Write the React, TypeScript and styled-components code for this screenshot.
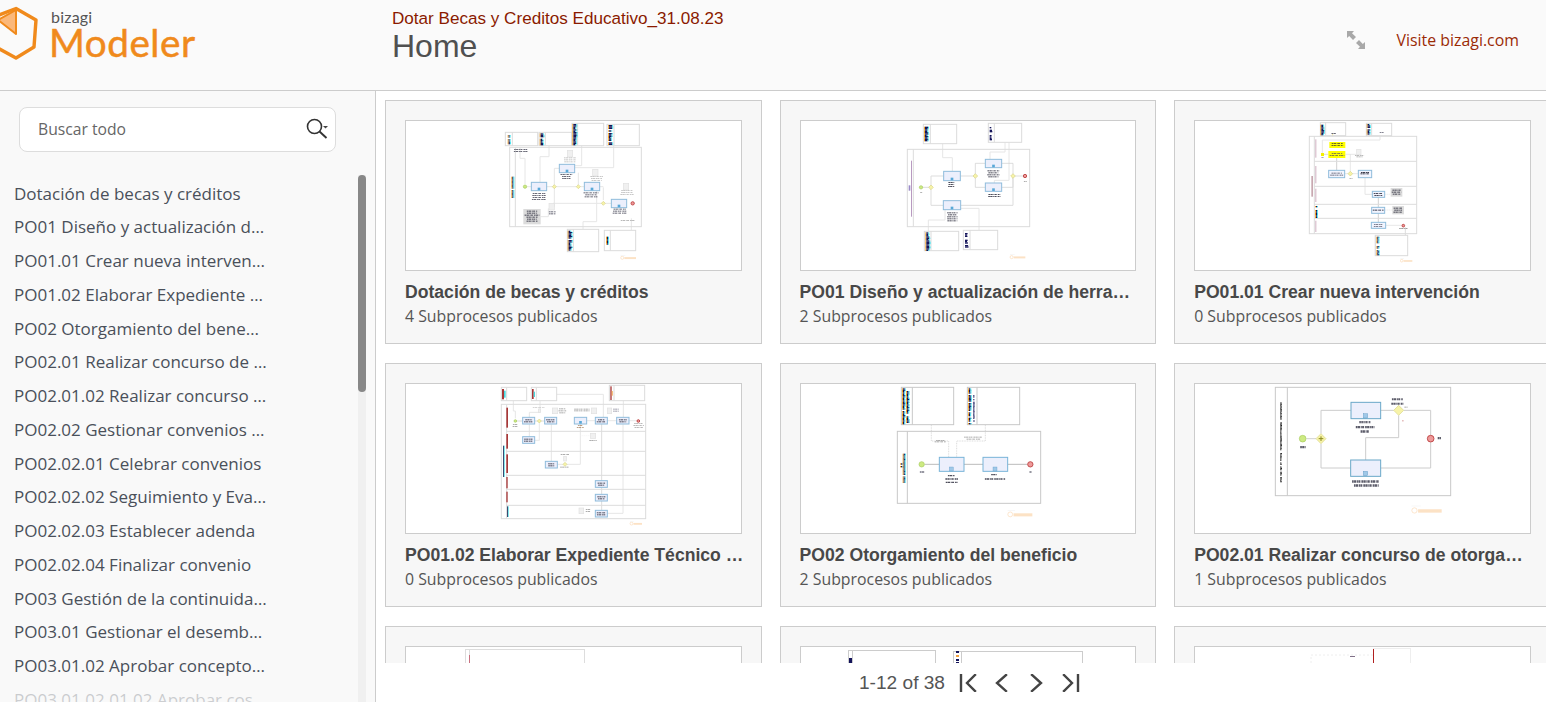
import React from "react";
import styled, { createGlobalStyle } from "styled-components";

const Global = createGlobalStyle`
  html, body { margin: 0; padding: 0; height: 100%; overflow: hidden; background: #fff; }
  #root { height: 100%; }
  * { box-sizing: border-box; }
`;

const Page = styled.div`
  display: flex; flex-direction: column; width: 1546px; height: 702px; overflow: hidden;
`;
const Header = styled.header`
  flex: 0 0 91px; display: flex; background: #fafafa; border-bottom: 1px solid #ccc; position: relative;
`;
const LogoBox = styled.div`
  flex: 0 0 392px; display: flex; align-items: flex-start;
`;
const LogoWords = styled.div`
  display: flex; flex-direction: column; margin: 8px 0 0 9px;
`;
const LogoSmall = styled.span`
  font: 400 16px/17px "Lato", sans-serif; color: #555; letter-spacing: .2px; margin-left: 2px;
`;
const LogoBig = styled.span`
  font: 400 38.7px/35px "Lato", sans-serif; color: #f08a1c; letter-spacing: .5px; -webkit-text-stroke: .5px #f08a1c;
`;
const HeaderTitles = styled.div`
  flex: 1; display: flex; flex-direction: column; padding-top: 9px;
`;
const ProcessName = styled.div`
  font: 400 17.1px/19px "Liberation Sans", Arial, sans-serif; color: #8a1a00;
`;
const PageName = styled.div`
  font: 400 32px/37px "Liberation Sans", Arial, sans-serif; color: #505050;
`;
const HeaderTools = styled.div`
  display: flex; align-items: center; gap: 32px; padding: 0 27px 10px 0;
`;
const VisitLink = styled.a`
  font: 400 15.9px/20px "Open Sans", sans-serif; color: #9a2a05;
`;
const Body = styled.div`
  flex: 1; display: flex; min-height: 0;
`;
const Sidebar = styled.aside`
  flex: 0 0 376px; background: #f9f9f9; border-right: 1px solid #ccc; position: relative; overflow: hidden;
  padding: 16px 0 0 0;
`;
const SearchBox = styled.div`
  width: 317px; height: 45px; margin-left: 19px; background: #fff; border: 1px solid #ddd; border-radius: 8px;
  display: flex; align-items: center; justify-content: space-between; padding: 0 6px 2px 18px;
`;
const SearchHint = styled.span`
  font: 400 15.7px/20px "Open Sans", sans-serif; color: #666;
`;
const TreeList = styled.ul`
  list-style: none; margin: 24.5px 0 0 0; padding: 0 0 0 14px;
`;
const TreeItem = styled.li`
  width: 254px; height: 33.75px; font: 400 17px/33.75px "Open Sans", sans-serif; color: #4a505a;
  white-space: nowrap; overflow: hidden; text-overflow: ellipsis;
`;
const Track = styled.div`
  position: absolute; left: 358px; top: 84px; bottom: 0; width: 8px; background: #f0f0f0;
`;
const Thumb = styled.div`
  height: 217px; background: #888; border-radius: 4px;
`;
const Fade = styled.div`
  position: absolute; left: 0; right: 18px; bottom: 0; height: 28px;
  background: linear-gradient(to bottom, rgba(249,249,249,0), rgba(249,249,249,.7) 40%, rgba(249,249,249,.75));
`;
const Main = styled.main`
  flex: 1; min-width: 0; display: flex; flex-direction: column; background: #fff;
`;
const Scroller = styled.div`
  flex: 1; min-height: 0; overflow: hidden; padding: 9px 0 0 9px;
`;
const CardGrid = styled.div`
  display: grid; grid-template-columns: repeat(3, 376.6px); gap: 19px 18px;
`;
const Card = styled.article`
  height: 244px; background: #f7f7f7; border: 1px solid #ccc; padding: 19px 19px 0 19px;
`;
const Preview = styled.div`
  width: 100%; height: 151px; background: #fff; border: 1px solid #ccc; overflow: hidden;
  svg { display: block; }
`;
const CardTitle = styled.h3`
  margin: 11px -3px 0 0; font: 700 17.6px/20px "Liberation Sans", Arial, sans-serif; color: #484848;
  white-space: nowrap; overflow: hidden; text-overflow: ellipsis;
`;
const CardMeta = styled.div`
  margin-top: 4px; font: 400 15.85px/20px "Open Sans", sans-serif; color: #555;
`;
const Pager = styled.footer`
  flex: 0 0 39px; background: #fff; display: flex; align-items: center; padding-left: 483px;
`;
const PagerText = styled.span`
  font: 400 19.1px/22px "Liberation Sans", Arial, sans-serif; color: #555; margin-right: 14px;
`;
const PagerIcons = styled.div`
  display: flex; align-items: center; gap: 12px;
`;

const BLUE = "#8fbcdc";
const LINE = "#e6e6e6";
const POOL = "#dcdcdc";

const hash = (n: number) => Math.abs(Math.sin(n * 12.9898) * 43758.5453) % 1;

type StripProps = { x: number; y: number; w: number; h: number; dark?: string; fringe?: boolean };
const Strip = ({ x, y, w, h, dark = "#14145a", fringe = true }: StripProps) => {
  const rows: React.ReactElement[] = [];
  const step = 4;
  for (let i = 0; i * step < h; i++) {
    const r = hash(x * 7 + y + i);
    if (r < 0.12) continue;
    const rw = Math.max(3, w * (0.4 + r * 0.6));
    const ry = y + i * step;
    rows.push(
      <g key={i}>
        {fringe && <rect x={x} y={ry} width={3} height={step} fill="#f2a020" />}
        <rect x={x + 3} y={ry} width={rw} height={step} fill={dark} />
        {fringe && <rect x={x + 3 + rw} y={ry} width={3} height={step} fill="#3fe0ee" />}
      </g>
    );
  }
  return <g>{rows}</g>;
};

type BarsProps = { x: number; y: number; w: number; n?: number; color?: string; gap?: number; t?: number };
const Bars = ({ x, y, w, n = 2, color = "#445", gap = 6, t = 3 }: BarsProps) => (
  <g opacity={0.8}>
    {Array.from({ length: n }).map((_, i) => {
      const bw = w * (0.65 + 0.35 * hash(x + i * 3 + y));
      const yy = y + i * gap + t / 2;
      return (
        <line key={i} x1={x + (w - bw) / 2} x2={x + (w + bw) / 2} y1={yy} y2={yy} stroke={color} strokeWidth={t}
          strokeDasharray="5 1 7 2 3 1 6 3" />
      );
    })}
  </g>
);

type PoolProps = { x: number; y: number; x2: number; y2: number; lane: number; color?: string; sw?: number };
const Pool = ({ x, y, x2, y2, lane, color = POOL, sw = 3 }: PoolProps) => (
  <g fill="none" stroke={color} strokeWidth={sw}>
    <rect x={x} y={y} width={x2 - x} height={y2 - y} />
    <line x1={lane} y1={y} x2={lane} y2={y2} />
  </g>
);

type TaskProps = { x: number; y: number; w: number; h: number; fill?: string; stroke?: string; mark?: boolean; sw?: number };
const Task = ({ x, y, w, h, fill = "#eceffc", stroke = BLUE, mark = true, sw = 3 }: TaskProps) => (
  <g>
    <rect x={x} y={y} width={w} height={h} fill={fill} stroke={stroke} strokeWidth={sw} />
    {mark && <rect x={x + w / 2 - 4} y={y + h - 9} width={8} height={8} fill="#58a8d8" />}
  </g>
);

type DotProps = { x: number; y: number; r?: number };
const Gate = ({ x, y, r = 8 }: DotProps) => (
  <polygon points={`${x},${y - r} ${x + r},${y} ${x},${y + r} ${x - r},${y}`} fill="#f7f3a8" stroke="#d8d48a" strokeWidth={2} />
);
const Start = ({ x, y, r = 5 }: DotProps) => <circle cx={x} cy={y} r={r} fill="#cdea82" stroke="#a8cc60" strokeWidth={2} />;
const End = ({ x, y, r = 5 }: DotProps) => <circle cx={x} cy={y} r={r} fill="#ee9a9a" stroke="#b83838" strokeWidth={2.5} />;

type LnProps = { p: string; c?: string; sw?: number; dash?: string };
const Ln = ({ p, c = LINE, sw = 3, dash }: LnProps) => (
  <polyline points={p} fill="none" stroke={c} strokeWidth={sw} strokeDasharray={dash} />
);

const Doc = ({ x, y, w = 16, h = 20 }: { x: number; y: number; w?: number; h?: number }) => (
  <rect x={x} y={y} width={w} height={h} fill="#f0f0f0" stroke="#e0e0e0" strokeWidth={2} />
);
const Note = ({ x, y, w, h }: { x: number; y: number; w: number; h: number }) => (
  <g>
    <rect x={x} y={y} width={w} height={h} fill="#dcdcdc" />
    <Bars x={x + 3} y={y + 5} w={w - 6} n={Math.floor((h - 6) / 6)} color="#223" />
  </g>
);
const Mark = ({ x, y, w = 46, h = 14 }: { x: number; y: number; w?: number; h?: number }) => (
  <g opacity={0.6}>
    <circle cx={x + h * 0.35} cy={y + h * 0.6} r={h * 0.33} fill="none" stroke="#fbc48a" strokeWidth={2} />
    <rect x={x + h * 0.8} y={y + h * 0.45} width={w - h * 0.8} height={h * 0.42} fill="#fbd0a0" />
    <rect x={x} y={y} width={w * 0.3} height={2} fill="#eee" />
  </g>
);

const Frame = ({ x0, y0, children }: { x0: number; y0: number; children: React.ReactNode }) => (
  <svg width={335} height={149} viewBox={`${x0} ${y0} 1005 447`}>{children}</svg>
);

const D1 = () => (
  <Frame x0={18} y0={63}>
    <Ln p="360,142 360,175 375,175 375,252" />
    <Ln p="447,137 447,170 420,170 420,247" />
    <Ln p="545,137 545,197 524,197" />
    <Ln p="641,137 641,203 524,203" />
    <Ln p="375,260 610,260" />
    <Ln p="463,205 478,205" />
    <Ln p="463,205 463,320" />
    <Ln p="459,310 634,310" />
    <Ln p="535,260 535,218" />
    <Ln p="590,272 590,365 549,365 549,388" />
    <Ln p="610,262 610,300" />
    <Ln p="694,355 694,390" />
    <Ln p="422,350 445,350 445,325" />
    <Pool x={316} y={97} x2={413} y2={137} lane={337} />
    <Strip x={323} y={105} w={4} h={26} />
    <Pool x={417} y={97} x2={515} y2={137} lane={436} />
    <Strip x={419} y={100} w={10} h={34} />
    <Pool x={516} y={70} x2={611} y2={137} lane={533} />
    <Strip x={517} y={72} w={11} h={62} />
    <Pool x={621} y={73} x2={718} y2={137} lane={642} />
    <Strip x={624} y={75} w={10} h={60} />
    <Pool x={329} y={142} x2={724} y2={380} lane={346} />
    <Strip x={334} y={230} w={2} h={62} />
    <Pool x={502} y={388} x2={596} y2={455} lane={520} />
    <Strip x={503} y={392} w={10} h={60} />
    <Pool x={613} y={391} x2={707} y2={452} lane={631} />
    <Strip x={618} y={410} w={3} h={22} />
    <Task x={394} y={247} w={46} h={25} />
    <Task x={478} y={193} w={46} h={25} />
    <Task x={553} y={247} w={46} h={25} />
    <Task x={634} y={298} w={46} h={25} />
    <Gate x={463} y={260} r={6} />
    <Gate x={535} y={260} r={6} />
    <Gate x={610} y={310} r={6} />
    <Start x={375} y={260} r={5} />
    <End x={698} y={310} r={5} />
    <Doc x={502} y={151} />
    <Doc x={578} y={208} />
    <Doc x={670} y={250} />
    <Doc x={447} y={310} />
    <Bars x={490} y={172} w={40} n={3} color="#bbb" />
    <Bars x={570} y={228} w={40} n={3} color="#bbb" />
    <Bars x={656} y={270} w={50} n={3} color="#bbb" />
    <Bars x={394} y={279} w={46} n={4} />
    <Bars x={480} y={222} w={38} n={3} />
    <Bars x={550} y={277} w={46} n={3} />
    <Bars x={636} y={326} w={46} n={3} />
    <Bars x={340} y={147} w={44} n={2} />
    <Bars x={445} y={334} w={24} n={2} />
    <Bars x={654} y={360} w={58} n={1} color="#aaa" />
    <Note x={370} y={327} w={52} h={46} />
    <Mark x={662} y={465} />
  </Frame>
);

const D2 = () => (
  <Frame x0={30} y0={33}>
    <Ln p="455,101 455,143 484,143 484,184" />
    <Ln p="642,97 642,126 597,126 597,148" />
    <Ln p="654,97 654,211 610,211 610,219" />
    <Ln p="390,232 420,232" c="#ddd" />
    <Ln p="420,232 420,198 458,198" c="#ddd" />
    <Ln p="420,232 420,286 457,286" c="#ddd" />
    <Ln p="508,198 553,198" c="#ddd" />
    <Ln p="553,198 553,160 583,160" c="#ccc" sw={2} />
    <Ln p="553,198 553,232 583,232" c="#ccc" sw={2} />
    <Ln p="632,160 666,160 666,198" c="#ccc" sw={2} />
    <Ln p="632,232 666,232 666,198" c="#ccc" sw={2} />
    <Ln p="509,286 666,286 666,198" c="#ddd" />
    <Ln p="666,198 702,198" c="#ddd" />
    <Ln p="462,299 462,330 412,330 412,364" />
    <Ln p="509,295 564,295 564,361" />
    <Pool x={397} y={43} x2={497} y2={101} lane={418} />
    <Strip x={399} y={50} w={10} h={43} />
    <Pool x={592} y={40} x2={692} y2={97} lane={610} />
    <Strip x={593} y={47} w={9} h={43} fringe={false} />
    <Pool x={349} y={118} x2={716} y2={350} lane={367} />
    <rect x={360} y={152} width={3} height={168} fill="#b89ac0" />
    <rect x={353} y={226} width={5} height={16} fill="#9a8ac8" />
    <Pool x={400} y={364} x2={503} y2={422} lane={420} />
    <Strip x={403} y={367} w={10} h={53} />
    <Pool x={517} y={361} x2={620} y2={419} lane={537} />
    <Strip x={519} y={365} w={12} h={50} fringe={false} />
    <Task x={458} y={184} w={50} h={28} />
    <Task x={583} y={148} w={49} h={25} />
    <Task x={583} y={219} w={49} h={25} />
    <Task x={457} y={272} w={52} h={27} />
    <Gate x={420} y={232} r={7} />
    <Gate x={553} y={198} r={7} />
    <Gate x={666} y={198} r={7} />
    <Start x={390} y={232} r={5} />
    <End x={702} y={198} r={5} />
    <Bars x={470} y={216} w={22} n={3} color="#223" />
    <Bars x={586} y={181} w={42} n={4} color="#223" />
    <Bars x={590} y={252} w={40} n={2} color="#223" />
    <Bars x={466} y={307} w={36} n={5} color="#223" />
    <Bars x={386} y={246} w={10} n={1} color="#999" />
    <Bars x={698} y={213} w={10} n={1} color="#999" />
    <Mark x={657} y={433} />
  </Frame>
);

const D3 = () => (
  <Frame x0={15} y0={33}>
    <Ln p="570,77 570,90 397,90 397,129" />
    <Ln p="428,72 428,80" c="#f6e9a0" />
    <Ln p="402,133 415,133" c="#ccc" sw={2} />
    <Ln p="466,133 500,133" c="#ddd" sw={2} />
    <Ln p="440,144 440,181" c="#bbb" sw={2} />
    <Ln p="464,191 505,191" c="#ddd" sw={2} />
    <Ln p="481,133 481,191" c="#ddd" sw={2} />
    <Ln p="525,203 525,253 547,253" />
    <Ln p="565,262 565,292" c="#bbb" sw={2} />
    <Ln p="565,310 565,337" c="#bbb" sw={2} />
    <Ln p="587,346 635,346" c="#ddd" sw={2} />
    <Ln p="646,352 646,376" c="#ccc" sw={2} />
    <Ln p="584,253 602,253" c="#ddd" sw={2} dash="3 3" />
    <Ln p="584,300 607,300" c="#ddd" sw={2} dash="3 3" />
    <Pool x={391} y={38} x2={467} y2={77} lane={407} />
    <Strip x={391} y={40} w={9} h={35} />
    <Pool x={529} y={40} x2={605} y2={77} lane={545} />
    <Strip x={530} y={42} w={8} h={32} />
    <Bars x={423} y={69} w={16} n={1} />
    <Bars x={566} y={66} w={18} n={1} color="#667" />
    <Pool x={358} y={79} x2={680} y2={371} lane={373} />
    <g stroke={POOL} strokeWidth={3}>
      <line x1={373} y1={154} x2={680} y2={154} />
      <line x1={373} y1={229} x2={680} y2={229} />
      <line x1={373} y1={283} x2={680} y2={283} />
      <line x1={373} y1={325} x2={680} y2={325} />
    </g>
    <rect x={364} y={198} width={5} height={62} fill="#c8a8b0" />
    <rect x={376} y={88} width={3} height={55} fill="#d0b0c0" />
    <rect x={376} y={168} width={3} height={52} fill="#d0b0c0" />
    <rect x={376} y={236} width={3} height={40} fill="#d0b0c0" />
    <Strip x={375} y={288} w={3} h={36} />
    <rect x={376} y={332} width={3} height={34} fill="#d0b0c0" />
    <Pool x={556} y={376} x2={653} y2={437} lane={556} />
    <Strip x={559} y={380} w={6} h={54} />
    <rect x={418} y={96} width={48} height={18} fill="#ffff00" />
    <Bars x={421} y={99} w={42} n={2} color="#443" />
    <rect x={415} y={123} width={51} height={21} fill="#ffff00" />
    <Bars x={419} y={129} w={44} n={2} color="#665" />
    <rect x={393} y={129} width={9} height={9} fill="#f4f000" />
    <Task x={416} y={181} w={48} h={22} mark={false} fill="#f2f5ff" />
    <Bars x={420} y={188} w={40} n={2} color="#556" />
    <Task x={505} y={181} w={40} h={22} mark={false} fill="#f2f5ff" />
    <Bars x={508} y={186} w={34} n={2} color="#112" gap={4} />
    <Task x={547} y={244} w={37} h={18} mark={false} fill="#f2f5ff" />
    <Bars x={551} y={249} w={28} n={2} color="#223" />
    <Task x={545} y={292} w={39} h={18} mark={false} fill="#f2f5ff" />
    <Bars x={548} y={299} w={33} n={1} color="#112" />
    <Task x={544} y={337} w={43} h={18} mark={false} fill="#f2f5ff" />
    <Bars x={548} y={342} w={35} n={2} color="#667" />
    <Note x={602} y={234} w={35} h={26} />
    <Note x={607} y={288} w={35} h={25} />
    <Gate x={481} y={191} r={7} />
    <End x={640} y={347} r={4} />
    <Doc x={500} y={118} w={13} h={16} />
    <Bars x={494} y={135} w={30} n={2} color="#aaa" gap={4} />
    <Bars x={476} y={204} w={14} n={1} color="#aaa" />
    <Bars x={626} y={354} w={30} n={1} color="#888" />
    <Bars x={393} y={141} w={10} n={1} color="#999" />
    <Mark x={631} y={445} w={36} h={12} />
  </Frame>
);

const D4 = () => (
  <Frame x0={18} y0={27}>
    <Ln p="340,77 340,108 346,108 346,130" />
    <Ln p="420,77 420,112 388,112 388,127" />
    <Ln p="470,58 610,58 610,127" />
    <Ln p="670,77 670,127" />
    <Ln p="346,138 368,138" c="#ccc" sw={2} />
    <Ln p="404,138 434,138" c="#ccc" sw={2} />
    <Ln p="388,148 388,185" />
    <Ln p="418,138 418,196 404,196" c="#ddd" sw={2} />
    <Ln p="454,148 454,259" />
    <Ln p="560,137 586,137" c="#ddd" sw={2} />
    <Ln p="622,137 650,137" c="#ddd" sw={2} />
    <Ln p="687,137 710,137" c="#ddd" sw={2} />
    <Ln p="472,268 541,268 541,147" />
    <Ln p="605,147 605,406" c="#ddd" />
    <Ln p="622,415 669,415 669,148" />
    <Ln p="541,182 570,182" c="#eee" sw={2} dash="3 3" />
    <Pool x={304} y={37} x2={380} y2={77} lane={320} />
    <rect x={306} y={42} width={6} height={31} fill="#a83838" />
    <rect x={312} y={47} width={5} height={21} fill="#48d8e0" />
    <Pool x={394} y={37} x2={470} y2={77} lane={409} />
    <rect x={396} y={42} width={5} height={30} fill="#a83838" />
    <rect x={401} y={50} width={4} height={16} fill="#48d8e0" />
    <Pool x={628} y={31} x2={734} y2={77} lane={642} />
    <rect x={631} y={34} width={4} height={41} fill="#a83838" />
    <rect x={635} y={48} width={3} height={14} fill="#f0a040" />
    <Pool x={304} y={88} x2={737} y2={431} lane={320} />
    <g stroke={POOL} strokeWidth={3}>
      <line x1={320} y1={169} x2={737} y2={169} />
      <line x1={320} y1={229} x2={737} y2={229} />
      <line x1={320} y1={301} x2={737} y2={301} />
      <line x1={320} y1={343} x2={737} y2={343} />
      <line x1={320} y1={391} x2={737} y2={391} />
    </g>
    <rect x={309} y={212} width={3} height={94} fill="#3a4a70" />
    <rect x={312} y={212} width={2} height={94} fill="#48e0e8" />
    <rect x={319} y={98} width={5} height={60} fill="#a83838" />
    <rect x={319} y={177} width={5} height={44} fill="#a83838" />
    <rect x={319} y={238} width={5} height={56} fill="#a83838" />
    <rect x={319} y={306} width={4} height={34} fill="#a83838" />
    <rect x={319} y={350} width={4} height={32} fill="#a83838" />
    <rect x={321} y={394} width={3} height={32} fill="#3a4a70" />
    <rect x={324} y={394} width={2} height={32} fill="#48e0e8" />
    {[[368, 127, 36], [434, 127, 36], [586, 127, 36], [650, 127, 37], [368, 185, 36], [436, 259, 36], [586, 317, 36], [586, 358, 36], [586, 406, 36]].map(([x, y, w]) => (
      <g key={`${x}-${y}`}>
        <Task x={x} y={y} w={w} h={20} mark={false} />
        <Bars x={x + 4} y={y + 6} w={w - 8} n={2} color="#223" />
      </g>
    ))}
    <Task x={523} y={127} w={37} h={20} />
    <Start x={346} y={138} r={4} />
    <Gate x={418} y={138} r={6} />
    <Gate x={495} y={268} r={6} />
    <End x={715} y={138} r={4} />
    <Doc x={457} y={99} w={16} h={17} />
    <Doc x={574} y={99} w={16} h={17} />
    <Doc x={622} y={99} w={13} h={17} />
    <Doc x={571} y={175} w={16} h={15} />
    <Doc x={537} y={399} w={14} h={17} />
    <Doc x={491} y={244} w={8} h={14} />
    <Doc x={415} y={102} w={7} h={10} />
    <Bars x={475} y={100} w={24} n={3} color="#999" />
    <Bars x={522} y={101} w={48} n={2} color="#999" gap={5} />
    <Bars x={637} y={101} w={22} n={2} color="#889" />
    <Bars x={564} y={195} w={30} n={1} color="#999" />
    <Bars x={477} y={237} w={36} n={1} color="#999" />
    <Bars x={480} y={275} w={26} n={1} color="#999" />
    <Bars x={398} y={96} w={36} n={1} color="#ccc" />
    <Bars x={335} y={147} w={22} n={2} color="#999" />
    <Bars x={700} y={144} w={32} n={3} color="#aaa" />
    <Bars x={555} y={402} w={18} n={2} color="#999" />
    <Bars x={530} y={150} w={22} n={2} color="#a86" />
    <Mark x={690} y={438} w={36} h={13} />
  </Frame>
);

const D5 = () => (
  <Frame x0={30} y0={27}>
    <Ln p="421,150 421,198 473,198 473,247" c="#ccc" sw={2} dash="3 2" />
    <Ln p="583,150 583,198 497,198 497,247" c="#ccc" sw={2} dash="3 2" />
    <Ln p="401,268 445,268" c="#999" sw={2} />
    <Ln p="519,268 576,268" c="#999" sw={2} />
    <Ln p="650,268 709,268" c="#999" sw={2} />
    <Pool x={331} y={37} x2={488} y2={149} lane={364} color="#c8c8c8" />
    <Strip x={333} y={40} w={6} h={106} />
    <Strip x={345} y={48} w={6} h={96} />
    <Pool x={529} y={37} x2={686} y2={149} lane={558} color="#c8c8c8" />
    <Strip x={531} y={40} w={6} h={106} />
    <Strip x={544} y={60} w={4} h={80} fringe={false} />
    <Pool x={319} y={169} x2={749} y2={385} lane={349} color="#c8c8c8" />
    <Strip x={327} y={265} w={6} h={20} />
    <Strip x={335} y={232} w={4} h={90} />
    <Task x={445} y={247} w={74} h={42} stroke="#78b4d8" mark={false} />
    <rect x={475} y={276} width={12} height={12} fill="#a0c8e8" stroke="#5898c8" />
    <Task x={576} y={247} w={74} h={42} stroke="#78b4d8" mark={false} />
    <rect x={606} y={276} width={12} height={12} fill="#a0c8e8" stroke="#5898c8" />
    <Start x={392} y={268} r={8} />
    <End x={718} y={268} r={8} />
    <Bars x={386} y={289} w={16} n={1} color="#556" t={4} />
    <Bars x={714} y={289} w={10} n={1} color="#556" t={4} />
    <Bars x={468} y={300} w={26} n={1} color="#223" t={4} />
    <Bars x={458} y={310} w={48} n={2} color="#223" gap={10} t={4} />
    <Bars x={598} y={297} w={22} n={1} color="#223" t={4} />
    <Bars x={578} y={310} w={68} n={1} color="#223" t={4} />
    <Bars x={430} y={195} w={36} n={2} color="#999" gap={4} />
    <Bars x={517} y={185} w={60} n={2} color="#999" gap={6} />
    <Mark x={650} y={405} w={74} h={22} />
  </Frame>
);

const D6 = () => (
  <Frame x0={15} y0={27}>
    <Ln p="349,191 378,191" c="#bbb" sw={2} />
    <Ln p="393,176 393,106 483,106" c="#ccc" />
    <Ln p="393,206 393,279 482,279" c="#ccc" />
    <Ln p="572,106 611,106" c="#ccc" />
    <Ln p="641,106 722,106 722,180" c="#ccc" />
    <Ln p="572,279 722,279 722,202" c="#ccc" />
    <Ln p="626,121 626,188 527,188 527,255" c="#ccc" />
    <Pool x={256} y={37} x2={782} y2={362} lane={292} color="#c8c8c8" />
    <Strip x={268} y={82} w={5} h={238} fringe={false} dark="#222" />
    <Task x={483} y={82} w={89} h={49} stroke="#6aa8c8" mark={false} />
    <rect x={520} y={116} width={13} height={13} fill="#a0c8e8" stroke="#4888b8" />
    <Task x={482} y={255} w={90} h={49} stroke="#6aa8c8" mark={false} />
    <rect x={520} y={289} width={13} height={13} fill="#a0c8e8" stroke="#4888b8" />
    <Start x={338} y={191} r={10} />
    <End x={722} y={191} r={10} />
    <Gate x={393} y={191} r={15} />
    <line x1={386} y1={191} x2={400} y2={191} stroke="#8a8a20" strokeWidth={3} />
    <line x1={393} y1={184} x2={393} y2={198} stroke="#8a8a20" strokeWidth={3} />
    <Gate x={626} y={106} r={15} />
    <Bars x={328} y={213} w={22} n={1} color="#334" t={7} />
    <Bars x={742} y={186} w={12} n={1} color="#334" t={7} />
    <Bars x={502} y={138} w={46} n={1} color="#445" t={7} />
    <Bars x={490} y={153} w={72} n={1} color="#334" t={7} />
    <Bars x={510} y={166} w={28} n={1} color="#334" t={7} />
    <Bars x={486} y={316} w={80} n={1} color="#334" t={7} />
    <Bars x={488} y={328} w={82} n={1} color="#334" t={7} />
    <Bars x={600} y={70} w={44} n={2} color="#334" gap={13} t={6} />
    <rect x={636} y={136} width={5} height={3} fill="#d8a0a0" />
    <Bars x={642} y={95} w={12} n={1} color="#999" />
    <Mark x={665} y={392} w={90} h={24} />
  </Frame>
);

const P7 = () => (
  <svg width={335} height={149} viewBox="0 0 335 149">
    <g fill="none" stroke="#ddd"><rect x={59.5} y={2.5} width={119} height={60} /><line x1={63.5} y1={2} x2={63.5} y2={62} /></g>
    <rect x={63} y={8} width={1} height={10} fill="#c87080" />
  </svg>
);
const P8 = () => (
  <svg width={335} height={149} viewBox="0 0 335 149">
    <g fill="none" stroke="#ccc"><rect x={47.5} y={3.5} width={87} height={60} /><line x1={51.5} y1={3} x2={51.5} y2={63} /><rect x={152.5} y={4.5} width={129} height={60} /><line x1={160.5} y1={4} x2={160.5} y2={64} /></g>
    <rect x={48} y={11} width={3} height={6} fill="#14145a" />
    <rect x={155} y={4} width={3} height={2} fill="#14145a" /><rect x={155} y={8} width={3} height={2} fill="#f0a040" /><rect x={155} y={12} width={3} height={2} fill="#14145a" /><rect x={155} y={15} width={3} height={2} fill="#14145a" />
  </svg>
);
const P9 = () => (
  <svg width={335} height={149} viewBox="0 0 335 149">
    <g fill="none" stroke="#eee"><polyline strokeDasharray="2 2" points="116,60 116,8 178,8" /><rect x={178.5} y={1.5} width={37} height={60} /></g>
    <rect x={155} y={9} width={5} height={1} fill="#807088" />
    <rect x={178} y={2} width={1} height={16} fill="#b02020" />
  </svg>
);

type CardData = { title: string; count: number; Drawing: React.FC };
const cards: CardData[] = [
  { title: "Dotación de becas y créditos", count: 4, Drawing: D1 },
  { title: "PO01 Diseño y actualización de herramientas de gestión", count: 2, Drawing: D2 },
  { title: "PO01.01 Crear nueva intervención", count: 0, Drawing: D3 },
  { title: "PO01.02 Elaborar Expediente Técnico de la intervención", count: 0, Drawing: D4 },
  { title: "PO02 Otorgamiento del beneficio", count: 2, Drawing: D5 },
  { title: "PO02.01 Realizar concurso de otorgamiento de becas", count: 1, Drawing: D6 },
  { title: "PO02.01.02 Realizar concurso", count: 0, Drawing: P7 },
  { title: "PO02.02 Gestionar convenios", count: 0, Drawing: P8 },
  { title: "PO02.02.01 Celebrar convenios", count: 0, Drawing: P9 },
];

const tree = [
  "Dotación de becas y créditos",
  "PO01 Diseño y actualización de herramientas de gestión",
  "PO01.01 Crear nueva intervención educativa",
  "PO01.02 Elaborar Expediente Técnico de la intervención",
  "PO02 Otorgamiento del beneficio educativo",
  "PO02.01 Realizar concurso de otorgamiento",
  "PO02.01.02 Realizar concurso en línea abierto",
  "PO02.02 Gestionar convenios institucionales",
  "PO02.02.01 Celebrar convenios",
  "PO02.02.02 Seguimiento y Evaluación de convenios",
  "PO02.02.03 Establecer adenda",
  "PO02.02.04 Finalizar convenio",
  "PO03 Gestión de la continuidad del beneficio",
  "PO03.01 Gestionar el desembolso de la subvención",
  "PO03.01.02 Aprobar conceptos de subvención",
  "PO03.01.02.01.02 Aprobar cos",
];

const LogoMark = () => (
  <svg width={40} height={62} viewBox="0 0 40 62" style={{ flex: "none" }}>
    <polygon points="-2,20 16,10 16,34" fill="#fbb87a" stroke="#f08a1c" strokeWidth={2} strokeLinejoin="round" />
    <polyline points="-6,17 16,8.5 36,20 34,47 16,58 -6,46" fill="none" stroke="#f08a1c" strokeWidth={3.4} strokeLinejoin="round" />
  </svg>
);

const ExpandIcon = () => (
  <svg width={18} height={18} viewBox="0 0 18 18" fill="none">
    <path d="M0 0h7L5 2.2 9 6 6 9 2.200 5 0 7z" fill="#a8a8a8" />
    <path d="M18 18h-7l2-2.200L9 12l3-3 3.800 4L18 11z" fill="#a8a8a8" />
  </svg>
);

const SearchIcon = () => (
  <svg width={24} height={24} viewBox="0 0 24 24" fill="none" stroke="#333">
    <circle cx={9.5} cy={9.5} r={7} strokeWidth={1.6} />
    <line x1={14.5} y1={14.5} x2={21.5} y2={21} strokeWidth={1.9} />
    <polygon points="18,9 23,9 20.5,11.5" fill="#444" stroke="none" />
  </svg>
);

const PagerIcon = ({ d, w }: { d: string; w: number }) => (
  <svg width={w} height={18} viewBox={`0 0 ${w} 18`} fill="none" stroke="#444" strokeWidth={2.4} strokeLinecap="square">
    <path d={d} />
  </svg>
);

export default function App() {
  return (
    <Page>
      <Global />
      <Header>
        <LogoBox>
          <LogoMark />
          <LogoWords>
            <LogoSmall>bizagi</LogoSmall>
            <LogoBig>Modeler</LogoBig>
          </LogoWords>
        </LogoBox>
        <HeaderTitles>
          <ProcessName>Dotar Becas y Creditos Educativo_31.08.23</ProcessName>
          <PageName>Home</PageName>
        </HeaderTitles>
        <HeaderTools>
          <ExpandIcon />
          <VisitLink>Visite bizagi.com</VisitLink>
        </HeaderTools>
      </Header>
      <Body>
        <Sidebar>
          <SearchBox>
            <SearchHint>Buscar todo</SearchHint>
            <SearchIcon />
          </SearchBox>
          <TreeList>
            {tree.map((t) => (
              <TreeItem key={t}>{t}</TreeItem>
            ))}
          </TreeList>
          <Track><Thumb /></Track>
          <Fade />
        </Sidebar>
        <Main>
          <Scroller>
            <CardGrid>
              {cards.map(({ title, count, Drawing }) => (
                <Card key={title}>
                  <Preview><Drawing /></Preview>
                  <CardTitle>{title}</CardTitle>
                  <CardMeta>{count} Subprocesos publicados</CardMeta>
                </Card>
              ))}
            </CardGrid>
          </Scroller>
          <Pager>
            <PagerText>1-12 of 38</PagerText>
            <PagerIcons>
              <PagerIcon w={18} d="M2 1v16M16 1L8 9l8 8" />
              <PagerIcon w={22} d="M17 1L8 9l9 8" />
              <PagerIcon w={22} d="M9 1l9 8-9 8" />
              <PagerIcon w={23} d="M21 1v16M7 1l8 8-8 8" />
            </PagerIcons>
          </Pager>
        </Main>
      </Body>
    </Page>
  );
}
